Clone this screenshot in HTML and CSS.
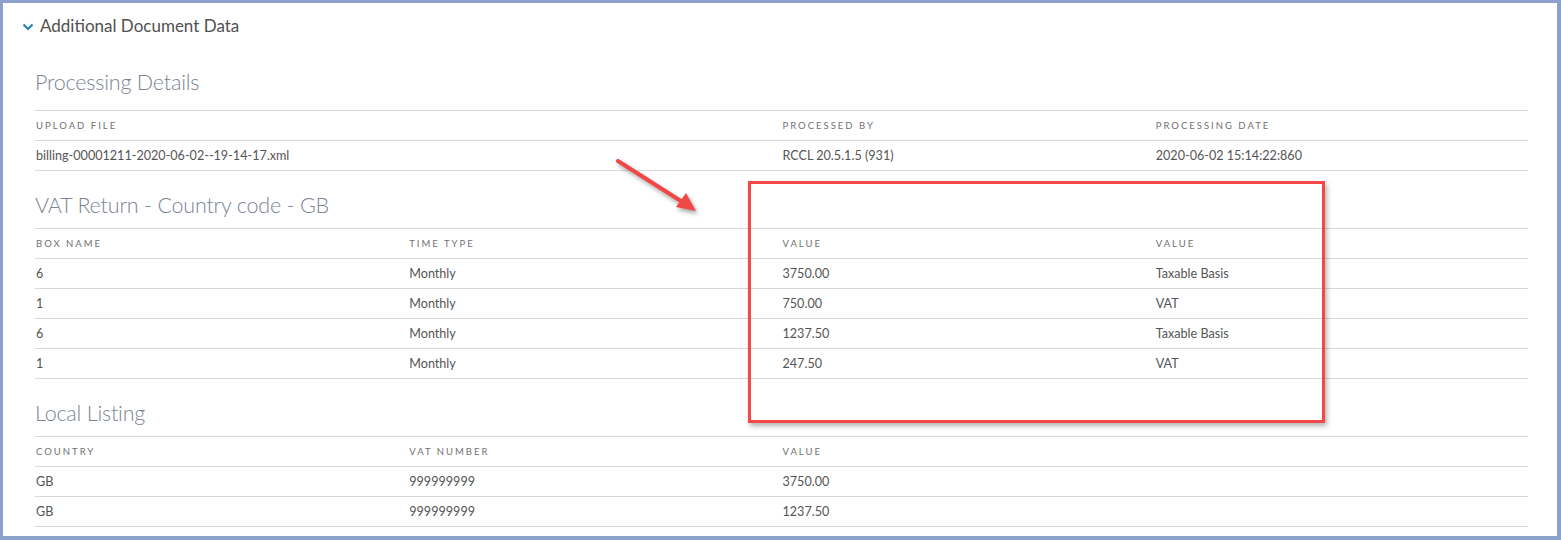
FILE: index.html
```html
<!DOCTYPE html>
<html lang="en">
<head>
    <meta charset="UTF-8">
    <meta name="viewport" content="width=device-width, initial-scale=1.0">
    <title>Additional Document Data</title>
    <link rel="stylesheet" href="styles.css">
</head>
<body>

<div class="frame">
    <div class="panel-header">
        <svg class="chevron" width="12" height="8" viewBox="0 0 12 8">
            <path d="M1.5 1.5 L6 6 L10.5 1.5" fill="none" stroke="#2b7fb8" stroke-width="2.2"/>
        </svg>
        <span>Additional Document Data</span>
    </div>

    <div class="panel-body">
        <!-- Processing Details -->
        <h2 class="section-title first">Processing Details</h2>
        <div class="data-table">
            <div class="row head">
                <div class="span-2">Upload File</div>
                <div>Processed By</div>
                <div>Processing Date</div>
            </div>
            <div class="row">
                <div class="span-2">billing-00001211-2020-06-02--19-14-17.xml</div>
                <div>RCCL 20.5.1.5 (931)</div>
                <div>2020-06-02 15:14:22:860</div>
            </div>
        </div>

        <!-- VAT Return -->
        <h2 class="section-title">VAT Return - Country code - GB</h2>
        <div class="data-table">
            <div class="row head">
                <div>Box Name</div>
                <div>Time Type</div>
                <div>Value</div>
                <div>Value</div>
            </div>
            <div class="row"><div>6</div><div>Monthly</div><div>3750.00</div><div>Taxable Basis</div></div>
            <div class="row"><div>1</div><div>Monthly</div><div>750.00</div><div>VAT</div></div>
            <div class="row"><div>6</div><div>Monthly</div><div>1237.50</div><div>Taxable Basis</div></div>
            <div class="row"><div>1</div><div>Monthly</div><div>247.50</div><div>VAT</div></div>
        </div>

        <!-- Local Listing -->
        <h2 class="section-title">Local Listing</h2>
        <div class="data-table">
            <div class="row head">
                <div>Country</div>
                <div>VAT Number</div>
                <div>Value</div>
                <div></div>
            </div>
            <div class="row"><div>GB</div><div>999999999</div><div>3750.00</div><div></div></div>
            <div class="row"><div>GB</div><div>999999999</div><div>1237.50</div><div></div></div>
        </div>
    </div>

    <!-- annotation overlay -->
    <svg class="note-arrow" width="100" height="70" viewBox="0 0 100 70">
        <line x1="4" y1="4" x2="70" y2="46" stroke="#f04747" stroke-width="4" stroke-linecap="round"/>
        <polygon points="82,54 62,50 72,36" fill="#f04747"/>
    </svg>
    <div class="note-box"></div>
</div>

</body>
</html>
```

FILE: styles.css
```css
body {
    margin: 0;
    padding: 0;
    background-color: #fff;
    font-family: 'Lato', 'Open Sans', sans-serif;
    color: #555;
}
.frame {
    position: relative;
    box-sizing: border-box;
    width: 1561px;
    height: 540px;
    border-style: solid;
    border-color: #8ba1cc;
    border-width: 3px 4px 4px 3px;
    background-color: #fff;
    overflow: hidden;
}
.panel-header {
    display: flex;
    align-items: center;
    gap: 6px;
    padding: 10px 0 0 19px;
    height: 24px;
    font-size: 17px;
    color: #505050;
}
.chevron {
    margin-top: 3px;
}
.panel-body {
    padding: 11px 29px 0 32px;
}
.section-title {
    margin: 21px 0 10px;
    font-size: 21.5px;
    line-height: 26px;
    font-weight: 300;
    letter-spacing: -0.2px;
    color: #7b8492;
}
.section-title.first {
    margin-bottom: 15px;
}
.data-table {
    border-top: 1px solid #d9d9d9;
}
.row {
    display: grid;
    grid-template-columns: repeat(4, 1fr);
    align-items: center;
    box-sizing: border-box;
    height: 30px;
    border-bottom: 1px solid #d9d9d9;
    font-size: 12.6px;
    color: #555;
}
.row > div {
    padding-left: 1px;
    white-space: nowrap;
}
.row .span-2 {
    grid-column: span 2;
}
.row.head {
    font-size: 9.5px;
    letter-spacing: 2px;
    text-transform: uppercase;
    color: #707070;
}
.note-arrow {
    position: absolute;
    left: 611px;
    top: 154px;
    filter: drop-shadow(2px 3px 2px rgba(0, 0, 0, 0.35));
}
.note-box {
    position: absolute;
    left: 745px;
    top: 178px;
    width: 571px;
    height: 236px;
    border: 3px solid #f44848;
    box-shadow: 2px 3px 5px rgba(0, 0, 0, 0.3);
}
```
